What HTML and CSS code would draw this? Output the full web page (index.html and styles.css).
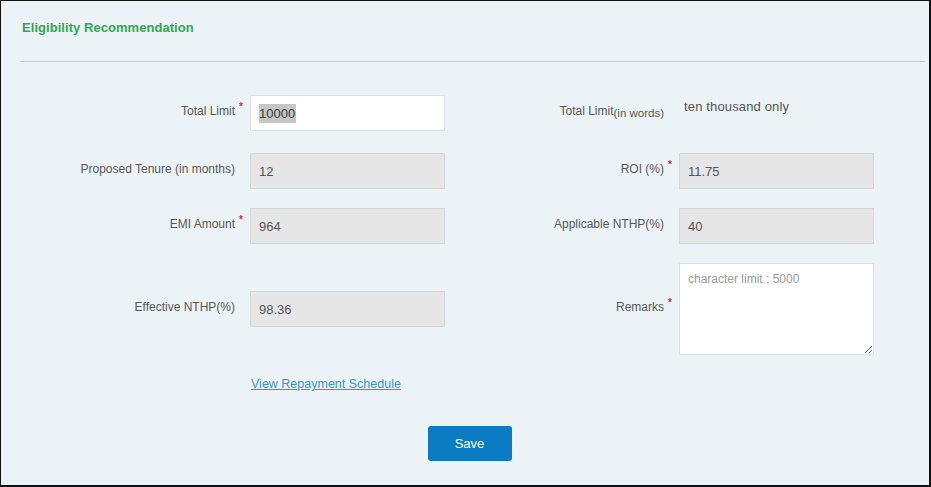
FILE: index.html
```html
<!DOCTYPE html>
<html lang="en">
<head>
<meta charset="utf-8">
<title>Eligibility Recommendation</title>
<link rel="stylesheet" href="styles.css">
</head>
<body>
<div class="frame">
  <div class="header">
    <h2 class="title">Eligibility Recommendation</h2>
  </div>
  <hr class="divider">
  <form class="form" onsubmit="return false">
    <div class="row row-first">
      <div class="field">
        <label class="label"><span class="req">Total Limit</span></label>
        <div class="box box-edit"><span class="sel">10000</span></div>
      </div>
      <div class="field">
        <label class="label">Total Limit<span class="small">(in words)</span></label>
        <div class="words">ten thousand only</div>
      </div>
    </div>
    <div class="row">
      <div class="field">
        <label class="label">Proposed Tenure (in months)</label>
        <input class="box box-ro" type="text" value="12" readonly>
      </div>
      <div class="field">
        <label class="label"><span class="req">ROI (%)</span></label>
        <input class="box box-ro" type="text" value="11.75" readonly>
      </div>
    </div>
    <div class="row">
      <div class="field">
        <label class="label"><span class="req">EMI Amount</span></label>
        <input class="box box-ro" type="text" value="964" readonly>
      </div>
      <div class="field">
        <label class="label">Applicable NTHP(%)</label>
        <input class="box box-ro" type="text" value="40" readonly>
      </div>
    </div>
    <div class="row">
      <div class="field">
        <label class="label">Effective NTHP(%)</label>
        <input class="box box-ro" type="text" value="98.36" readonly>
      </div>
      <div class="field">
        <label class="label"><span class="req">Remarks</span></label>
        <textarea class="area" placeholder="character limit : 5000"></textarea>
      </div>
    </div>
    <div class="link-row">
      <a class="link" href="#">View Repayment Schedule</a>
    </div>
    <div class="actions">
      <button class="btn" type="button">Save</button>
    </div>
  </form>
</div>
</body>
</html>
```

FILE: styles.css
```css
* { box-sizing: border-box; }
html, body { margin: 0; padding: 0; background: #ffffff; }
body { font-family: "Liberation Sans", Arial, sans-serif; }

.frame {
  width: 931px;
  height: 487px;
  border: 2px solid #111111;
  border-left-width: 1px;
  border-top-width: 1px;
  background: #ecf3f6;
  overflow: hidden;
}

.header { padding: 19px 0 0 21px; height: 60px; }
.title {
  margin: 0;
  font-size: 13px;
  line-height: 15px;
  font-weight: bold;
  color: #2fa84f;
  letter-spacing: 0.05px;
}

.divider {
  margin: 0 4px 0 19px;
  border: 0;
  border-top: 1px solid #c9cdd0;
  height: 0;
}

.form {
  padding: 33px 0 0 19px;
  width: 918px;
  display: flex;
  flex-direction: column;
}

.row { display: flex; align-items: center; margin-bottom: 19px; }
.row-first { margin-bottom: 22px; }

.field {
  width: 429px;
  display: flex;
  align-items: center;
}

.label {
  width: 215px;
  flex: 0 0 215px;
  text-align: right;
  font-size: 12px;
  line-height: 14px;
  color: #585858;
  padding-bottom: 5px;
  margin-right: 15px;
}
.small { font-size: 11.5px; position: relative; top: 2px; }

.req { position: relative; }
.req::after {
  content: "*";
  position: absolute;
  left: 100%;
  top: -4px;
  margin-left: 4px;
  color: #e8202a;
  font-size: 10px;
  font-weight: bold;
}

.box {
  width: 195px;
  height: 36px;
  padding: 0 8px;
  font-family: "Liberation Sans", Arial, sans-serif;
  font-size: 13px;
  color: #555555;
  border: 1px solid #d6d8d8;
  outline: none;
  margin: 0;
}
.box-edit {
  background: #ffffff;
  border-color: #dfe1e2;
  display: flex;
  align-items: center;
}
.sel { background: #c6c6c6; color: #3a3a3a; line-height: 19px; padding: 0 1px 0 0; }
.box-ro { background: #e6e6e6; }

.words {
  font-size: 13px;
  color: #555555;
  margin-left: 5px;
  padding-bottom: 14px;
  letter-spacing: 0.15px;
}

.area {
  width: 195px;
  height: 92px;
  padding: 7px 8px;
  font-family: "Liberation Sans", Arial, sans-serif;
  font-size: 12px;
  line-height: 16px;
  color: #555555;
  background: #ffffff;
  border: 1px solid #dfe1e2;
  outline: none;
  margin: 0;
  display: block;
}
.area::placeholder { color: #9a9a9a; }

.link-row { padding-left: 231px; }
.link {
  font-size: 12.5px;
  line-height: 15px;
  color: #3597cd;
  text-decoration: underline;
}

.actions { display: flex; justify-content: center; margin-top: 34px; }
.btn {
  width: 84px;
  height: 35px;
  background: #0b7cc4;
  color: #ffffff;
  border: 0;
  border-radius: 3px;
  font-family: "Liberation Sans", Arial, sans-serif;
  font-size: 13px;
  cursor: pointer;
}
```
